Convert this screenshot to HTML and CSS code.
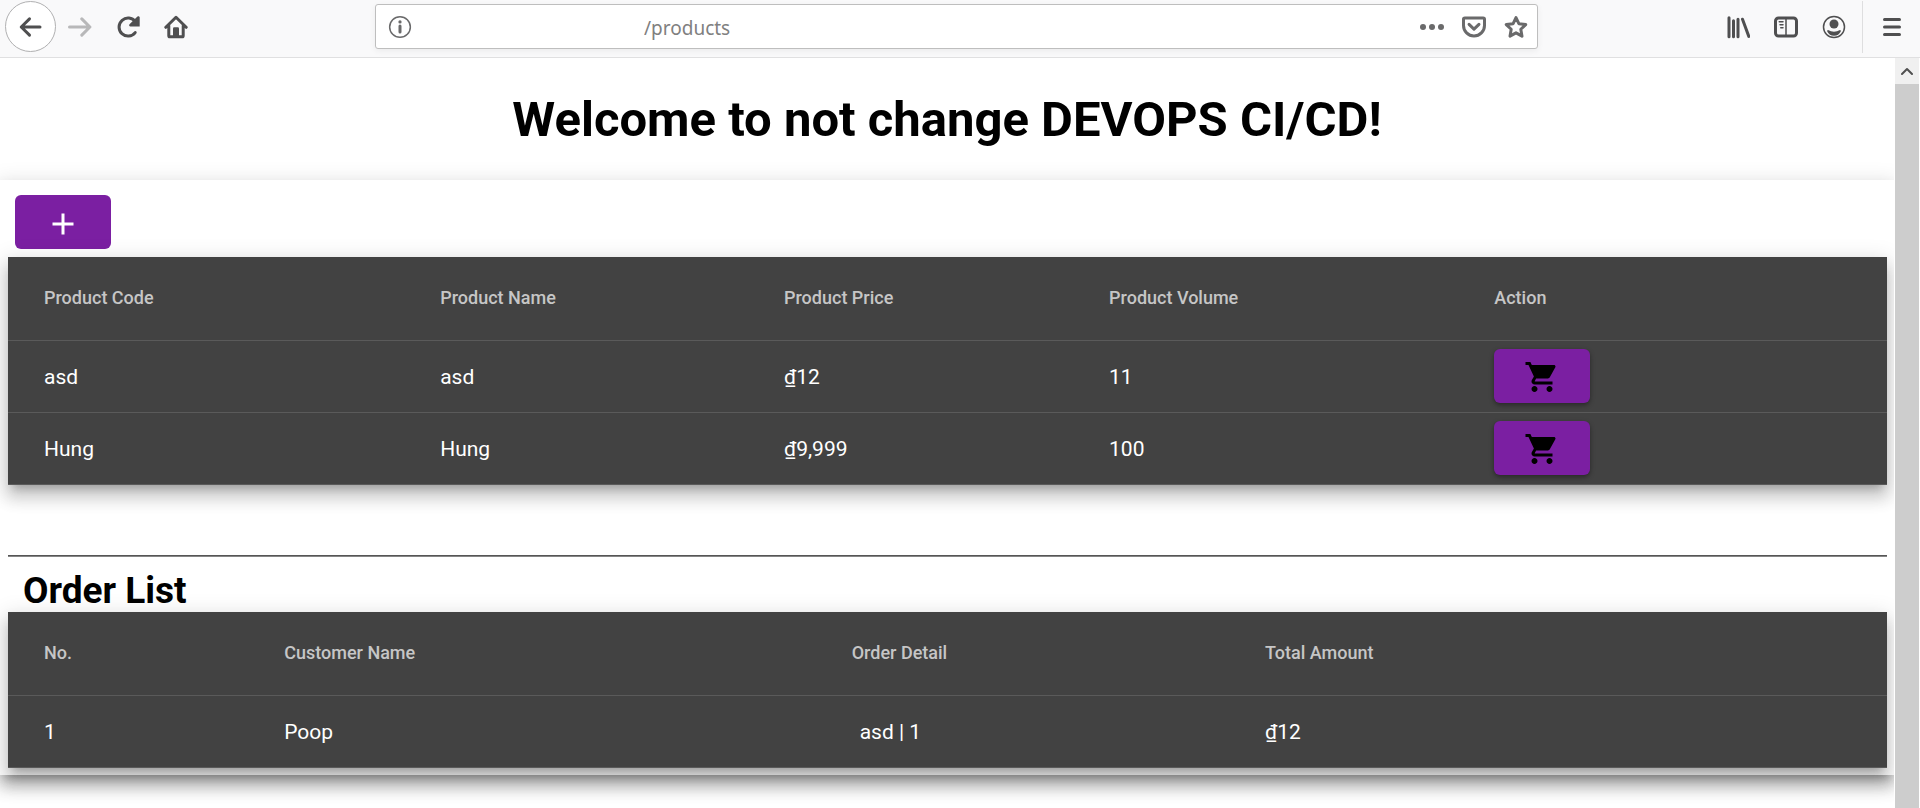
FILE: index.html
```
<!DOCTYPE html>
<html lang="en">
<head>
<meta charset="utf-8">
<title>Products</title>
<link rel="stylesheet" href="styles.css">
</head>
<body>
<div class="window">
  <header class="toolbar">
    <nav class="nav" aria-label="Navigation">
      <button class="back" aria-label="Back"><svg viewBox="0 0 16 16"><path d="M14 8H1.500M7 2.600 1.500 8l5.500 5.400" class="s2"/></svg></button>
      <button class="tool dim" aria-label="Forward"><svg viewBox="0 0 16 16"><path d="M1 8h13.200M9.200 2.600 14.600 8l-5.400 5.400" class="s2"/></svg></button>
      <button class="tool" aria-label="Reload"><svg viewBox="0 0 16 16"><path d="M12.800 11.700A6 6 0 1 1 12.900 4.500l1.100 1.200" class="s2"/><path d="M15.800 1.500v6.200h-6.200a.9.900 0 0 1-.6-1.500l5.300-5.200a.9.900 0 0 1 1.500.5z"/></svg></button>
      <button class="tool" aria-label="Home"><svg viewBox="0 0 16 16"><path d="M1.200 8.200 8 1.500l6.800 6.700M3.200 7v6.800q0 .7.700.7h8.200q.7 0 .7-.7V7" class="s2"/><path d="M6 15V9q0-.8.800-.8h2.400q.8 0 .8.800v6z"/></svg></button>
    </nav>
    <div class="address">
      <svg class="icon" viewBox="0 0 16 16"><circle cx="8" cy="8" r="6.900" class="s1"/><circle cx="8" cy="4.600" r="1.100"/><path d="M8 7.400v3.900" class="s2"/></svg>
      <input class="url" type="text" aria-label="Address" value="/products">
      <button class="tool" aria-label="Page actions"><svg viewBox="0 0 16 16"><circle cx="2" cy="8" r="2"/><circle cx="8" cy="8" r="2"/><circle cx="14" cy="8" r="2"/></svg></button>
      <button class="tool" aria-label="Save to Pocket"><svg viewBox="0 0 16 16"><path d="M1.900 2h12.200q.9 0 .9.900V7A7 7 0 0 1 1 7V2.900Q1 2 1.900 2zM4.700 6.200 8 9.400l3.300-3.200" class="s2"/></svg></button>
      <button class="tool" aria-label="Bookmark"><svg viewBox="0 0 16 16"><path d="m8 1.700 1.900 4.100 4.600.6-3.300 3.100.8 4.600L8 11.900l-4 2.200.8-4.600L1.500 6.400l4.600-.6z" class="s2"/></svg></button>
    </div>
    <div class="extras">
      <button class="tool" aria-label="Library"><svg viewBox="0 0 16 16"><path d="M2 1.800v12.700M5 3.800v10.700M8 2.800v11.700M11 2.800l4.200 11.500" class="s2"/></svg></button>
      <button class="tool" aria-label="Sidebars"><svg viewBox="0 0 16 16"><rect x="1" y="2" width="14" height="12" rx="2" class="s2"/><path d="M8 2v12M3.500 4.500H6M4 6.500h2M4.500 8.500H6" class="s1"/></svg></button>
      <button class="tool" aria-label="Account"><svg viewBox="0 0 16 16"><circle cx="8" cy="8" r="7" class="s1"/><circle cx="8" cy="6" r="3"/><path d="M4 10q4 2.400 8 0 .8 0 .5 1a5 5 0 0 1-9 0q-.3-1 .5-1z"/></svg></button>
    </div>
    <div class="menu"><button class="tool" aria-label="Menu"><svg viewBox="0 0 16 16"><path d="M3 3h10M3 8h10M3 13h10" class="s2"/></svg></button></div>
  </header>
  <div class="viewport">
    <main class="page">
      <h1 class="welcome">Welcome to not change DEVOPS CI/CD!</h1>
      <section class="panel">
        <button class="btn add" aria-label="Add product"><svg viewBox="0 0 24 24"><path d="M19 13h-6v6h-2v-6H5v-2h6V5h2v6h6v2z"/></svg></button>
        <table class="grid">
          <colgroup><col class="p1"><col class="p2"><col class="p3"><col class="p4"><col></colgroup>
          <thead><tr><th>Product Code</th><th>Product Name</th><th>Product Price</th><th>Product Volume</th><th>Action</th></tr></thead>
          <tbody>
            <tr><td>asd</td><td>asd</td><td>₫12</td><td>11</td><td><button class="btn cart" aria-label="Add asd to cart"><svg viewBox="0 0 24 24"><path d="M7 18c-1.100 0-1.990.9-1.990 2S5.900 22 7 22s2-.9 2-2-.9-2-2-2zM1 2v2h2l3.600 7.590-1.350 2.450c-.16.280-.25.610-.25.960 0 1.100.9 2 2 2h12v-2H7.420c-.14 0-.25-.11-.25-.25l.03-.12.900-1.630h7.450c.75 0 1.410-.41 1.750-1.030l3.580-6.490c.08-.14.120-.31.120-.48 0-.55-.45-1-1-1H5.210l-.94-2H1zm16 16c-1.100 0-1.990.9-1.990 2s.89 2 1.990 2 2-.9 2-2-.9-2-2-2z"/></svg></button></td></tr>
            <tr><td>Hung</td><td>Hung</td><td>₫9,999</td><td>100</td><td><button class="btn cart" aria-label="Add Hung to cart"><svg viewBox="0 0 24 24"><path d="M7 18c-1.100 0-1.990.9-1.990 2S5.900 22 7 22s2-.9 2-2-.9-2-2-2zM1 2v2h2l3.600 7.590-1.350 2.450c-.16.280-.25.610-.25.960 0 1.100.9 2 2 2h12v-2H7.420c-.14 0-.25-.11-.25-.25l.03-.12.900-1.630h7.450c.75 0 1.410-.41 1.750-1.030l3.580-6.490c.08-.14.120-.31.120-.48 0-.55-.45-1-1-1H5.210l-.94-2H1zm16 16c-1.100 0-1.990.9-1.990 2s.89 2 1.990 2 2-.9 2-2-.9-2-2-2z"/></svg></button></td></tr>
          </tbody>
        </table>
        <hr class="rule">
        <h2 class="orders">Order List</h2>
        <table class="grid">
          <colgroup><col class="o1"><col class="o2"><col class="o3"><col></colgroup>
          <thead><tr><th>No.</th><th>Customer Name</th><th>Order Detail</th><th>Total Amount</th></tr></thead>
          <tbody><tr><td>1</td><td>Poop</td><td><span class="detail">asd | 1</span></td><td>₫12</td></tr></tbody>
        </table>
      </section>
    </main>
    <div class="scrollbar" aria-hidden="true">
      <div class="scroll-up"><svg viewBox="0 0 12 12"><path d="M1 9l5-5 5 5" class="s2"/></svg></div>
      <div class="thumb"></div>
    </div>
  </div>
</div>
</body>
</html>
```
FILE: styles.css
```
* { box-sizing: border-box; }
body { margin: 0; background: #fff; color: #000; font-family: Roboto, "Noto Sans", sans-serif; }
button { font: inherit; border: 0; padding: 0; background: none; color: inherit; }
svg { display: block; fill: currentColor; }
.s1, .s2 { fill: none; stroke: currentColor; stroke-linecap: round; stroke-linejoin: round; }
.s1 { stroke-width: 1; }
.s2 { stroke-width: 2; }

.window { height: 100vh; display: flex; flex-direction: column; overflow: hidden; }

.toolbar { flex: none; display: flex; align-items: center; height: 58px; padding: 0 0 4px 5px; background: #f9f9fa; border-bottom: 1px solid #e0e0e1; color: #4f4f50; }
.nav { flex: none; display: flex; align-items: center; width: 370px; gap: 24px; }
.tool svg, .back svg, .icon { width: 24px; height: 24px; }
.back { display: grid; place-items: center; width: 51px; height: 51px; margin-right: -12px; border: 1px solid #b0b0b1; border-radius: 50%; background: #fff; }
.dim { color: #b8b8b9; }
.address { flex: 1; display: flex; align-items: center; gap: 18px; height: 45px; padding: 0 9px 0 12px; border: 1px solid #bebebe; border-radius: 3px; background: #fff; color: #6a6a6b; box-shadow: 0 2px 6px rgba(0, 0, 0, .06); }
.icon { flex: none; }
.url { flex: 1; min-width: 0; height: 36px; padding: 2px 0 0 214px; border: 0; outline: 0; background: none; color: #808080; font: 19px "Noto Sans", sans-serif; }
.extras { flex: none; display: flex; gap: 24px; margin-left: 188px; }
.menu { flex: none; display: grid; place-items: center; width: 58px; height: 52px; margin-left: 16px; border-left: 1px solid #dededf; }

.viewport { flex: 1; min-height: 0; display: flex; }
.page { flex: 1; min-width: 0; overflow: hidden; }
.welcome { margin: 0; padding: 34px 0 32px; text-align: center; font-size: 49px; line-height: 56px; font-weight: 700; }
.panel, .grid { box-shadow: 0 8px 8px -5px rgba(0, 0, 0, .2), 0 12px 15px 2px rgba(0, 0, 0, .14), 0 5px 21px 3px rgba(0, 0, 0, .12); }
.panel { padding: 15px 7px 7px 8px; background: #fff; }
.btn { display: grid; place-items: center; width: 96px; height: 54px; padding-top: 3px; border-radius: 6px; background: #7b1fa2; color: #000; box-shadow: 0 2px 5px rgba(0, 0, 0, .4); }
.btn svg { width: 36px; height: 36px; }
.add { margin: 0 0 8px 7px; color: #fff; box-shadow: none; }
.cart { margin-bottom: 2px; }

.grid { width: 100%; table-layout: fixed; border-collapse: separate; border-spacing: 0; background: #424242; color: #fff; font-size: 21px; }
.grid th, .grid td { padding: 0; text-align: left; border-bottom: 1px solid #5a5a5a; }
.grid th { height: 84px; padding-bottom: 2px; color: #c6c6c6; font-size: 18px; font-weight: 500; }
.grid td { height: 72px; }
.grid th:first-child, .grid td:first-child { padding-left: 36px; }
.p1 { width: 23%; }
.p2 { width: 18.3%; }
.p3 { width: 17.3%; }
.p4 { width: 20.5%; }
.o1 { width: 14.7%; }
.o2 { width: 30.2%; }
.o3 { width: 22%; }
.detail { padding-left: 8px; }
.rule { height: 2px; margin: 70px 0 13px; border: 0; border-top: 1px solid #555; background: #858585; }
.orders { margin: 0; padding-left: 15px; font-size: 37px; line-height: 42px; font-weight: 700; }

.scrollbar { flex: none; display: flex; flex-direction: column; width: 26px; padding: 0 1px; }
.scroll-up { display: grid; place-items: center; height: 26px; background: #f0f0f0; color: #505050; }
.scroll-up svg { width: 12px; height: 12px; }
.thumb { flex: 1; background: #cdcdcd; }
```
